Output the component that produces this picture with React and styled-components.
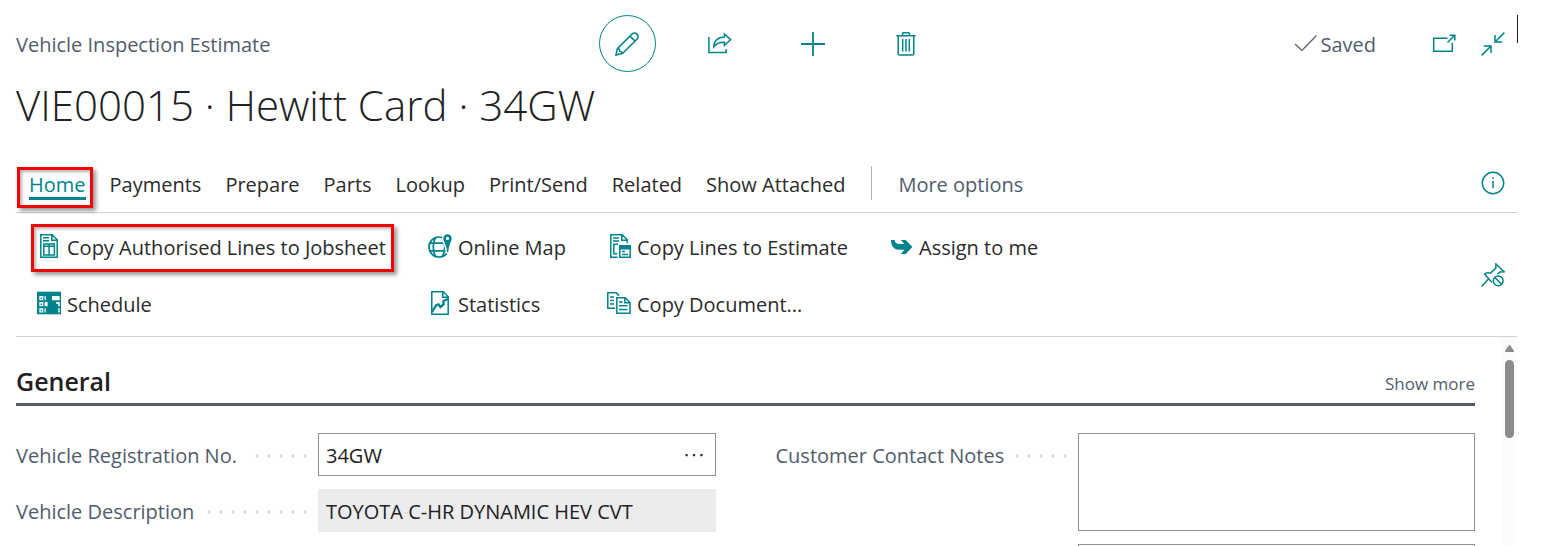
import React from "react";
import styled, { createGlobalStyle, css } from "styled-components";

const teal = "#00838a";
const ink = "#2b2b2b";
const slate = "#505c6d";

const GlobalStyle = createGlobalStyle`
  * { box-sizing: border-box; }
  body {
    margin: 0;
    background: #fff;
    color: ${ink};
    font-family: "Open Sans", "Noto Sans", sans-serif;
    font-size: 20px;
    line-height: 28px;
  }
  button, input, textarea { font: inherit; color: inherit; }
`;

const Page = styled.main`
  display: flex;
  flex-direction: column;
  height: 100vh;
  overflow: hidden;
  padding: 15px 39px 0 16px;
`;

const TopBar = styled.header`
  display: grid;
  grid-template-columns: 1fr auto 1fr;
  align-items: center;
`;

const PageType = styled.p`
  margin: 0;
  padding-top: 2px;
  color: ${slate};
`;

const Actions = styled.div`
  display: flex;
  gap: 36px;
`;

const IconButton = styled.button`
  display: grid;
  place-items: center;
  flex: none;
  width: ${(p) => p.$size || 24}px;
  height: ${(p) => p.$size || 24}px;
  padding: 0;
  border: ${(p) => (p.$ringed ? `1px solid ${teal}` : "0")};
  border-radius: 50%;
  background: none;
  color: ${(p) => (p.$dark ? ink : teal)};
`;

const StatusArea = styled.div`
  display: flex;
  justify-content: flex-end;
  height: 100%;
`;

const Status = styled.div`
  display: flex;
  align-items: center;
  gap: 25px;
  padding-right: 12px;
`;

const Saved = styled.span`
  display: flex;
  align-items: center;
  gap: 2px;
  margin-right: 31px;
  padding-top: 2px;
  color: ${slate};

  svg { margin-bottom: 2px; }
`;

const EdgeMark = styled.span`
  width: 1px;
  height: 28px;
  margin-right: -1px;
  background: #222;
`;

const Title = styled.h1`
  margin: 0;
  padding-top: 3px;
  font-size: 42px;
  font-weight: 300;
  line-height: 60px;
  color: #212121;
`;

const TabBar = styled.nav`
  display: flex;
  align-items: center;
  justify-content: space-between;
  height: 55px;
  margin-top: 23px;
  padding: 8px 12px 12px 13px;
  border-bottom: 1px solid #d0d2d7;
`;

const Tabs = styled.div`
  display: flex;
  align-items: center;
  gap: 24px;
`;

const Tab = styled.button`
  position: relative;
  padding: 4px 0 0;
  border: 0;
  background: none;
  line-height: 24px;
  white-space: nowrap;
  color: ${(p) => (p.$muted ? slate : ink)};
  ${(p) =>
    p.$active &&
    css`
      color: ${teal};
      box-shadow: 0 3px 0 ${teal};
    `}
`;

const Callout = styled.span`
  position: absolute;
  inset: ${(p) => p.$inset};
  border: 3px solid #f80000;
  box-shadow: 3px 3px 4px rgba(0, 0, 0, 0.4), inset 2px 2px 3px rgba(0, 0, 0, 0.3);
  pointer-events: none;
`;

const Divider = styled.span`
  width: 1px;
  height: 34px;
  margin: 0 2px;
  background: #b0b3ba;
`;

const Ribbon = styled.section`
  display: flex;
  align-items: center;
  justify-content: space-between;
  height: 124px;
  padding: 0 12px 0 21px;
  border-bottom: 1px solid #d0d2d7;
`;

const Commands = styled.div`
  display: grid;
  grid-template-columns: 391px 179px 282px auto;
  grid-auto-rows: 28px;
  row-gap: 29px;
  justify-items: start;
  padding-top: 3px;
`;

const Command = styled.button`
  position: relative;
  display: flex;
  align-items: center;
  gap: 6px;
  padding: 0;
  border: 0;
  background: none;
  white-space: nowrap;

  svg { color: ${teal}; margin-bottom: 4px; }
`;

const Body = styled.div`
  display: flex;
  justify-content: space-between;
  flex: 1;
  min-height: 0;
`;

const Content = styled.div`
  flex: 1;
  margin-right: 27px;
`;

const ScrollTrack = styled.div`
  display: flex;
  flex-direction: column;
  align-items: center;
  gap: 8px;
  width: 15px;
  padding-top: 8px;
  background: #fcfcfc;
`;

const Thumb = styled.div`
  width: 9px;
  height: 78px;
  border-radius: 5px;
  background: #8b8b8b;
`;

const GroupHeader = styled.div`
  display: flex;
  align-items: center;
  justify-content: space-between;
  height: 69px;
  padding-top: 21px;
  border-bottom: 3px solid ${slate};
`;

const GroupTitle = styled.h2`
  margin: 0;
  font-size: 25px;
  font-weight: 600;
  line-height: 32px;
  color: #212121;
`;

const ShowMore = styled.button`
  padding: 6px 0 0;
  border: 0;
  background: none;
  font-size: 17px;
  color: ${slate};
`;

const Form = styled.form`
  display: grid;
  grid-template-columns: 1fr 1fr;
  column-gap: 60px;
  padding-top: 27px;
`;

const Column = styled.div`
  display: flex;
  flex-direction: column;
  gap: 13px;
`;

const Field = styled.div`
  display: grid;
  grid-template-columns: 302px 1fr;
`;

const Label = styled.label`
  display: flex;
  align-items: center;
  justify-content: space-between;
  height: 43px;
  padding: 3px 7px 0 0;
  color: ${slate};
  white-space: nowrap;
`;

const Leader = styled.span`
  width: ${(p) => p.$dots * 12}px;
  height: 4px;
  background: radial-gradient(circle at center, #d3d6da 0 1px, transparent 2px) 0 0 / 12px 4px;
`;

const Box = styled.div`
  display: flex;
  align-items: center;
  height: ${(p) => (p.$tall ? 98 : 43)}px;
  padding-right: 9px;
  border: 1px solid ${(p) => (p.$readOnly ? "#ebecee" : "#8b919c")};
  background: ${(p) => (p.$readOnly ? "#ebecee" : "#fff")};
  color: #212121;
`;

const Input = styled.input`
  flex: 1;
  min-width: 0;
  padding: 3px 7px 0;
  border: 0;
  outline: 0;
  background: none;
`;

const TextArea = styled.textarea`
  flex: 1;
  height: 100%;
  padding: 7px;
  border: 0;
  outline: 0;
  resize: none;
  background: none;
`;

function Icon({ size = 24, width = 1.5, children }) {
  return (
    <svg width={size} height={size} viewBox="0 0 24 24" fill="none" stroke="currentColor" strokeWidth={width} aria-hidden="true">
      {children}
    </svg>
  );
}

const PencilIcon = () => (
  <Icon>
    <path d="M.9 23.1 2.4 16.6 17.4 1.7a3.6 3.6 0 0 1 5 5L7.4 21.6ZM15 4.1l5 5M2.4 16.6c1.7.2 2.3.9 2.4 2.4 1.5.2 2.3.9 2.6 2.6" />
  </Icon>
);
const ShareIcon = () => (
  <Icon>
    <path d="M.9 5v15.500h17.200V17M16.400 2l6.200 5.600-6.200 5.900v-3.300c-5.400 0-8.600 1.500-10.600 4.600 0-5.600 4-9.800 10.600-9.900Z" />
  </Icon>
);
const PlusIcon = () => (
  <Icon width={1.8}>
    <path d="M12 0v24M0 12h24" />
  </Icon>
);
const TrashIcon = () => (
  <Icon>
    <path d="M2.300 3.700h19.400M8.500 3.500V1.700q0-.9.900-.9h5.200q.9 0 .9.900v1.800M4.200 3.700v17.800q0 1.600 1.600 1.600h12.400q1.600 0 1.600-1.600V3.700M8.700 7v12.500M12 7v12.500M15.300 7v12.500" />
  </Icon>
);
const CheckIcon = () => (
  <Icon width={1.2}>
    <path d="m1 12 7 6.500L22.500 3.500" />
  </Icon>
);
const PopOutIcon = () => (
  <Icon>
    <path d="M15.500 6.200H1.700v13h18.600V11M15.500 10.500l7-7M17.500 3.300h5.300v5.300" />
  </Icon>
);
const CollapseIcon = () => (
  <Icon>
    <path d="m23.400.6-9.200 9.200M14 3v7h7.200M.6 23.400l9.200-9.200M10 21v-7H2.800" />
  </Icon>
);
const InfoIcon = () => (
  <Icon>
    <circle cx="12" cy="12" r="10.700" />
    <path d="M12 9.800v7.400M12 6.200v1.800" />
  </Icon>
);
const UnpinIcon = () => (
  <Icon>
    <path d="M.6 23.400 7.300 16.200M11 19.400 3.600 11c1.500-1.600 3.400-1.700 6-.9l5.200-5L14.900.9l8.300 7.900-4.100.3-2.700 2" />
    <circle cx="17.200" cy="17.800" r="4.900" />
    <path d="m13.800 14.400 6.900 6.900" />
  </Icon>
);
const SheetIcon = () => (
  <Icon>
    <path d="M3.800.8h11.400l5 5v17.400H3.800ZM14.800.8v5.400h5.400M6 3.700h6M6 6.800h6M6.800 10h10.600v11H6.800ZM12.100 10v11M6.800 12.200h10.600" />
  </Icon>
);
const ScheduleIcon = () => (
  <Icon>
    <path fill="currentColor" stroke="none" d="M0 .7h24v22.600H0Z" />
    <path fill="#fff" stroke="none" d="M2.300 5h4v4.300h-4ZM2.300 11h4v4.300h-4ZM2.300 17.300h4v4.300h-4ZM7.600 5h1.200v4.300H7.600ZM7.600 11h3v4.300h-3ZM7.600 17.300h1.200v4.300H7.600ZM15 5h7.700v4.300H15ZM19.300 11h3.400v4.300h-1.500v-2.300h-1.900ZM21.300 17.300h1.400v4.300h-1.400Z" />
    <path fill="currentColor" stroke="none" d="M3.600 6.500h1.400v1.400H3.600ZM3.600 12.500h1.400v1.400H3.600ZM3.600 18.800h1.400v1.400H3.600Z" />
  </Icon>
);
const GlobeIcon = () => (
  <Icon width={1.7}>
    <circle cx="11" cy="13" r="10" />
    <path d="M1.500 9.200h19M1.500 16.800h19M7.500 3.500c-3 5.500-3 13.500 0 19M14.500 3.500c3 5.500 3 13.500 0 19" />
    <path fill="currentColor" stroke="#fff" strokeWidth="1.400" d="M19.500-.5a4.900 4.900 0 0 1 4.900 4.900c0 3.600-3.400 6-3.600 14.400h-2.400C18.200 10.400 14.600 8 14.600 4.400A4.900 4.900 0 0 1 19.500-.5Z" />
    <circle cx="19.500" cy="4.400" r="1.600" fill="#fff" stroke="none" />
  </Icon>
);
const StatisticsIcon = () => (
  <Icon>
    <path d="M3.800.8h11.400l5 5v17.400H3.800ZM14.800.8v5.400h5.400" />
    <path strokeWidth="2.300" d="m4 21 4-6.500 2.500-1 2 2.500 3-2.500V10l4.500-2" />
  </Icon>
);
const CopyLinesIcon = () => (
  <Icon>
    <path d="M10.500 23.200H3.800V.8h11.400l5 5v3.400M14.800.8v5.400h5.400M6 4h6M6 7h6M11 10.200H6.800v9.600h3.400" />
    <path d="M12.800 12h10.400v11.200H12.800ZM15 17.500h3M15 20.500h6" />
    <path fill="currentColor" stroke="none" d="M12 11h12v4.500H12Z" />
  </Icon>
);
const CopyDocumentIcon = () => (
  <Icon>
    <path d="M8 17.200H.8V1.800h8.400L12 4.600M3 6h4M3 9.500h4M3 13h4M9.800 6.800h8.400l4.800 4.800v10.600H9.800ZM17.800 6.800v5h5M12 11h3.500M12 14.700h8.500M12 18.400h8.500" />
  </Icon>
);
const AssignIcon = () => (
  <Icon>
    <path fill="currentColor" stroke="none" d="M2 6h3.600c.2 2.800 2 4 5.400 4h4.400L11.800 6h4.800L23.400 13l-6.800 7h-4.800l3.600-4.200H11C5 15.800 2 12.500 2 6Z" />
  </Icon>
);
const MoreIcon = () => (
  <Icon>
    <path fill="currentColor" stroke="none" d="M3.500 11h2.200v2.200H3.500ZM10.900 11h2.200v2.200h-2.200ZM18.300 11h2.200v2.200h-2.200Z" />
  </Icon>
);

const tabs = ["Payments", "Prepare", "Parts", "Lookup", "Print/Send", "Related", "Show Attached"];

const commands = [
  { text: "Copy Authorised Lines to Jobsheet", Glyph: SheetIcon, marked: true },
  { text: "Online Map", Glyph: GlobeIcon },
  { text: "Copy Lines to Estimate", Glyph: CopyLinesIcon },
  { text: "Assign to me", Glyph: AssignIcon },
  { text: "Schedule", Glyph: ScheduleIcon },
  { text: "Statistics", Glyph: StatisticsIcon },
  { text: "Copy Document...", Glyph: CopyDocumentIcon },
];

export default function App() {
  return (
    <>
      <GlobalStyle />
      <Page>
        <TopBar>
          <PageType>Vehicle Inspection Estimate</PageType>
          <Actions>
            <IconButton $size={57} $ringed aria-label="Edit"><PencilIcon /></IconButton>
            <IconButton $size={57} aria-label="Share"><ShareIcon /></IconButton>
            <IconButton $size={57} aria-label="New"><PlusIcon /></IconButton>
            <IconButton $size={57} aria-label="Delete"><TrashIcon /></IconButton>
          </Actions>
          <StatusArea>
            <Status>
              <Saved><CheckIcon />Saved</Saved>
              <IconButton aria-label="Open in new window"><PopOutIcon /></IconButton>
              <IconButton aria-label="Collapse"><CollapseIcon /></IconButton>
            </Status>
            <EdgeMark />
          </StatusArea>
        </TopBar>

        <Title>VIE00015 · Hewitt Card · 34GW</Title>

        <TabBar>
          <Tabs>
            <Tab $active>
              Home
              <Callout $inset="-2px -7px -11px -12px" />
            </Tab>
            {tabs.map((name) => (
              <Tab key={name}>{name}</Tab>
            ))}
            <Divider />
            <Tab $muted>More options</Tab>
          </Tabs>
          <IconButton aria-label="Details"><InfoIcon /></IconButton>
        </TabBar>

        <Ribbon>
          <Commands>
            {commands.map(({ text, Glyph, marked }) => (
              <Command key={text}>
                <Glyph />
                {text}
                {marked && <Callout $inset="-10px -8px -10px -6px" />}
              </Command>
            ))}
          </Commands>
          <IconButton aria-label="Unpin"><UnpinIcon /></IconButton>
        </Ribbon>

        <Body>
          <Content>
            <GroupHeader>
              <GroupTitle>General</GroupTitle>
              <ShowMore>Show more</ShowMore>
            </GroupHeader>
            <Form>
              <Column>
                <Field>
                  <Label htmlFor="registration">Vehicle Registration No.<Leader $dots={5} /></Label>
                  <Box>
                    <Input id="registration" defaultValue="34GW" />
                    <IconButton type="button" $dark aria-label="Look up"><MoreIcon /></IconButton>
                  </Box>
                </Field>
                <Field>
                  <Label htmlFor="description">Vehicle Description<Leader $dots={9} /></Label>
                  <Box $readOnly>
                    <Input id="description" readOnly defaultValue="TOYOTA C-HR DYNAMIC HEV CVT" />
                  </Box>
                </Field>
              </Column>
              <Column>
                <Field>
                  <Label htmlFor="notes">Customer Contact Notes<Leader $dots={5} /></Label>
                  <Box $tall>
                    <TextArea id="notes" />
                  </Box>
                </Field>
                <Field>
                  <span />
                  <Box $tall>
                    <TextArea aria-label="Additional notes" />
                  </Box>
                </Field>
              </Column>
            </Form>
          </Content>
          <ScrollTrack>
            <svg width="9" height="7" viewBox="0 0 9 7" aria-hidden="true">
              <path fill="#8b8b8b" d="M3.700.6q.8-1 1.600 0L8.800 5.500Q9.200 7 8 7H1Q-.2 7 .2 5.500Z" />
            </svg>
            <Thumb />
          </ScrollTrack>
        </Body>
      </Page>
    </>
  );
}
